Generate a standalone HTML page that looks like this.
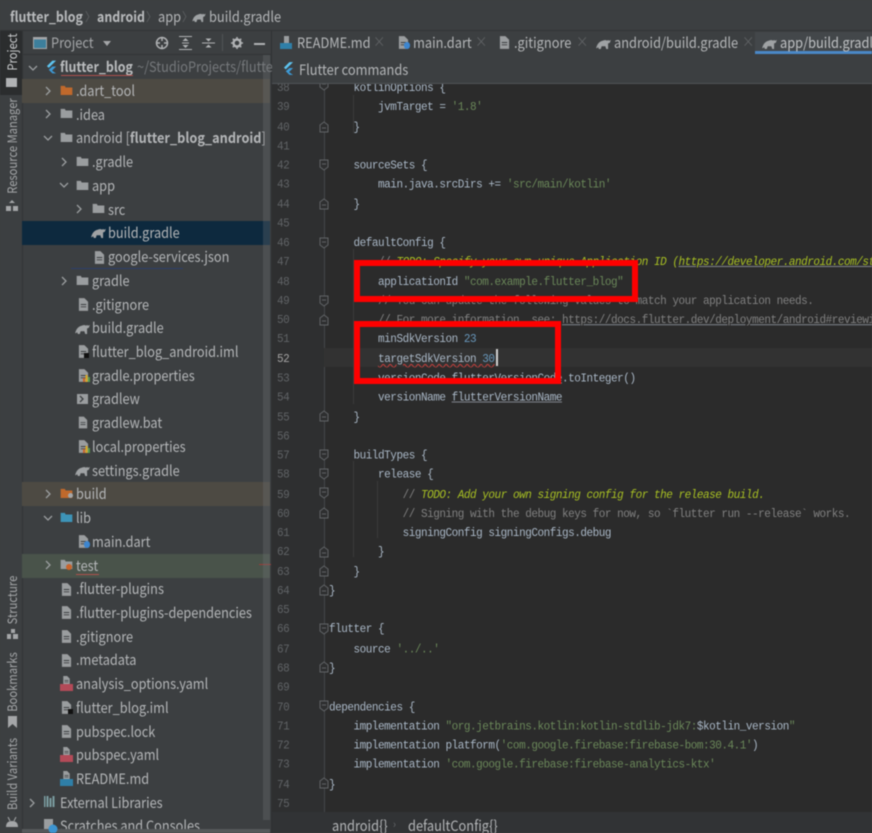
<!DOCTYPE html>
<html><head><meta charset="utf-8">
<style>
html,body{margin:0;padding:0;background:#3c3f41}
#w{position:relative;width:872px;height:833px;overflow:hidden;background:#3c3f41;font-family:"Noto Sans CJK KR","Liberation Sans",sans-serif;color:#afb1b3;filter:blur(.45px)}
#w div,#w svg,#w span.a{position:absolute}
.r{height:24px;line-height:24px;font-size:14.4px;white-space:nowrap;color:#b4b6b8;transform:scaleX(.885);transform-origin:left center}
.bg{left:22px;width:248px;height:24px}
.t{height:24px;line-height:24px;font-size:14.4px;white-space:nowrap;color:#b4b6b8;transform:scaleX(.89);transform-origin:left center}
.bd{transform:scaleX(.86)}
.v{writing-mode:vertical-rl;transform:translateY(-50%) rotate(180deg) scaleY(.86);font-size:13px;line-height:16px;left:4px;color:#a4a6a8;white-space:nowrap}
pre{margin:0;font-family:"Liberation Mono",monospace;font-size:11px;letter-spacing:-.47px;line-height:17.26px;color:#a9b7c6;transform:scaleY(1.12);transform-origin:left top}
.c{color:#808080}.s{color:#6a8759}.n{color:#6897bb}.d{color:#a8c023;font-style:italic}.u{text-decoration:underline;text-decoration-color:#7a7e85}
.w{text-decoration:underline wavy #bc3f3c 1px}
.g{color:#606366}
.x{color:#5e6163;font-size:14px}
</style></head><body>
<div id="w">
<svg width="0" height="0" style="left:0;top:0">
<defs>
<symbol id="fo" viewBox="0 0 14 12"><path d="M0 1h5l1 2h8v9H0z"/></symbol>
<symbol id="fi" viewBox="0 0 12 14"><path d="M1 0h6l4 4v10H1z" fill="#9a9d9f"/><path d="M3 7h6M3 9.500h6" stroke="#3c3f41"/></symbol>
<symbol id="gr" viewBox="0 0 16 12"><path d="M0 11c1-4 3-7 7-8 2-1 4-1 5 0l1-1 1 1 2-1-1 3-2 1v6h-2l-1-3H6l-1 3H3l-1-2-1 1z" fill="#9fa2a4"/></symbol>
<symbol id="fl" viewBox="0 0 12 14"><path d="M7 0h4L3 8 1 6z" fill="#5ec4f0"/><path d="M7 6.500h4L6.500 11l4.500 3H7L3 10z" fill="#3d9ad6"/></symbol>
<symbol id="ch" viewBox="0 0 8 10"><path d="M2 1l4 4-4 4" fill="none" stroke="#9a9d9f" stroke-width="1.300"/></symbol>
<symbol id="cd" viewBox="0 0 10 8"><path d="M1 2l4 4 4-4" fill="none" stroke="#9a9d9f" stroke-width="1.300"/></symbol>
<symbol id="fu" viewBox="0 0 12 12"><path d="M2 11h8V4L6 1 2 4z" fill="#2e2f30" stroke="#606366"/><path d="M4 7h4" stroke="#606366"/></symbol>
<symbol id="fd" viewBox="0 0 12 12"><path d="M2 1h8v7l-4 3-4-3z" fill="#2e2f30" stroke="#606366"/><path d="M4 5h4" stroke="#606366"/></symbol>
</defs>
</svg>

<!-- top breadcrumb -->
<div class="t bd" style="left:10px;top:5px;font-weight:700;color:#b9bbbd">flutter_blog</div>
<div class="t" style="left:85px;top:5px;color:#5e6163;font-size:12px">〉</div>
<div class="t bd" style="left:96.500px;top:5px;font-weight:700;color:#b9bbbd">android</div>
<div class="t" style="left:146px;top:5px;color:#5e6163;font-size:12px">〉</div>
<div class="t" style="left:158px;top:5px">app</div>
<div class="t" style="left:182px;top:5px;color:#5e6163;font-size:12px">〉</div>
<svg style="left:192px;top:12px" width="14" height="10" fill="#999"><use href="#gr"/></svg>
<div class="t" style="left:209px;top:5px">build.gradle</div>
<div style="left:0;top:30px;width:872px;height:1px;background:#323436"></div>

<!-- left strip -->
<div style="left:0;top:31px;width:22px;height:64px;background:#2b2d2e"></div>
<div style="left:22px;top:31px;width:1px;height:802px;background:#323436"></div>
<div class="v" style="top:51.500px;color:#c8cacc">Project</div>
<div style="left:6px;top:78px;width:11px;height:9px;background:#b0b2b4"></div>
<div class="v" style="top:145.500px">Resource Manager</div>
<svg style="left:6px;top:200px" width="12" height="11"><path d="M6 0l3 3H3zM0 6h5v5H0zM7 6h5v5H7z" fill="#a4a6a8"/></svg>
<div class="v" style="top:599.500px">Structure</div>
<svg style="left:7px;top:629px" width="11" height="10"><path d="M4 0h4v4H4zM0 5h4v5H0zM6 5h5v5H6z" fill="#a4a6a8"/></svg>
<div class="v" style="top:682px">Bookmarks</div>
<svg style="left:7px;top:716px" width="11" height="12"><path d="M1 0h9v12L5.500 8 1 12z" fill="#a4a6a8"/></svg>
<div class="v" style="top:773.500px">Build Variants</div>
<svg style="left:6px;top:817px" width="12" height="10"><path d="M0 10c0-4 2-6 6-6s6 2 6 6z" fill="#a4a6a8"/><path d="M2 0l2 4M10 0L8 4" stroke="#a4a6a8"/></svg>

<!-- project toolbar -->
<svg style="left:33px;top:37px" width="14" height="12"><rect x=".5" y=".5" width="13" height="11" fill="#3d7f9c" stroke="#a4a6a8"/><rect x=".5" y=".5" width="13" height="2" fill="#a4a6a8"/></svg>
<div class="t" style="left:51px;top:31px;color:#a4a6a8">Project</div>
<svg style="left:103px;top:41px" width="8" height="5"><path d="M0 0h8L4 5z" fill="#a4a6a8"/></svg>
<svg style="left:155px;top:36px" width="14" height="14"><circle cx="7" cy="7" r="5.500" fill="none" stroke="#b0b2b4" stroke-width="1.500"/><path d="M7 1v4M7 9v4M1 7h4M9 7h4" stroke="#b0b2b4" stroke-width="1.500"/></svg>
<svg style="left:179px;top:36px" width="13" height="14"><path d="M0 .5h13M0 13.500h13M3 7h7" stroke="#b0b2b4"/><path d="M6.500 2l3 3h-6zM6.500 12l3-3h-6z" fill="#b0b2b4"/></svg>
<svg style="left:202px;top:36px" width="13" height="14"><path d="M0 7h13" stroke="#b0b2b4"/><path d="M6.500 5.500l3-3h-6zM6.500 8.500l3 3h-6z" fill="#b0b2b4"/></svg>
<div style="left:222px;top:34px;width:1px;height:17px;background:#505356"></div>
<svg style="left:231px;top:37px" width="12" height="12"><circle cx="6" cy="6" r="3.500" fill="none" stroke="#b0b2b4" stroke-width="2.400"/><path d="M6 0v2M6 10v2M0 6h2M10 6h2M1.800 1.800l1.400 1.400M8.800 8.800l1.400 1.400M1.800 10.200l1.400-1.400M8.800 3.200l1.400-1.400" stroke="#b0b2b4" stroke-width="1.500"/></svg>
<div style="left:254px;top:43px;width:11px;height:1.500px;background:#b0b2b4"></div>
<div style="left:271px;top:31px;width:1px;height:802px;background:#2f3133"></div>
<div style="left:22px;top:54px;width:250px;height:1px;background:#323436"></div>

<!-- row backgrounds -->
<div class="bg" style="top:79px;background:#4d4a43"></div>
<div class="bg" style="top:221px;background:#0d293e"></div>
<div class="bg" style="top:482px;background:#4d4a43"></div>
<div class="bg" style="top:553.500px;background:#49534a"></div>

<!-- tree text -->
<div class="r bd" style="left:60px;top:55px;font-weight:700;color:#bbbdbf">flutter_blog</div>
<div class="r" style="left:137px;top:55px;color:#75787b">~/StudioProjects/flutte</div>
<div style="left:61px;top:75px;width:72px;height:1px;background:#b0504c"></div>
<div class="r" style="left:76px;top:79px">.dart_tool</div>
<div class="r" style="left:76px;top:102.700px">.idea</div>
<div class="r" style="left:76px;top:126.400px">android [<b>flutter_blog_android</b>]</div>
<div class="r" style="left:92px;top:150px">.gradle</div>
<div class="r" style="left:92px;top:173.900px">app</div>
<div class="r" style="left:108px;top:197.600px">src</div>
<div class="r" style="left:108px;top:221.300px">build.gradle</div>
<div class="r" style="left:108px;top:245px">google-services.json</div>
<div style="left:71px;top:268px;width:112px;height:1px;background:#2d3f6a"></div>
<div class="r" style="left:92px;top:268.800px">gradle</div>
<div class="r" style="left:92px;top:292.500px">.gitignore</div>
<div class="r" style="left:92px;top:316.200px">build.gradle</div>
<div class="r" style="left:92px;top:339.900px">flutter_blog_android.iml</div>
<div class="r" style="left:92px;top:363.700px">gradle.properties</div>
<div class="r" style="left:92px;top:387.400px">gradlew</div>
<div class="r" style="left:92px;top:411.100px">gradlew.bat</div>
<div class="r" style="left:92px;top:434.800px">local.properties</div>
<div class="r" style="left:92px;top:458.600px">settings.gradle</div>
<div class="r" style="left:76px;top:482.300px">build</div>
<div class="r" style="left:76px;top:506px">lib</div>
<div class="r" style="left:92px;top:529.700px">main.dart</div>
<div class="r" style="left:76px;top:553.500px">test</div>
<div style="left:76px;top:574px;width:23px;height:1px;background:#b0504c"></div>
<div style="left:259px;top:564px;width:12px;height:1px;background:#9c3b38"></div>
<div class="r" style="left:76px;top:577.200px">.flutter-plugins</div>
<div class="r" style="left:76px;top:600.900px">.flutter-plugins-dependencies</div>
<div class="r" style="left:76px;top:624.600px">.gitignore</div>
<div class="r" style="left:76px;top:648.400px">.metadata</div>
<div class="r" style="left:76px;top:672.100px">analysis_options.yaml</div>
<div class="r" style="left:76px;top:695.800px">flutter_blog.iml</div>
<div class="r" style="left:76px;top:719.500px">pubspec.lock</div>
<div class="r" style="left:76px;top:743.300px">pubspec.yaml</div>
<div class="r" style="left:76px;top:767px">README.md</div>
<div class="r" style="left:60px;top:790.700px">External Libraries</div>
<div class="r" style="left:60px;top:814.400px">Scratches and Consoles</div>
<div style="left:263px;top:55px;width:7px;height:765px;background:rgba(120,122,124,.28)"></div>
<div style="left:22px;top:829px;width:248px;height:4px;background:#55585a"></div>

<!-- chevrons -->
<svg style="left:28px;top:64px" width="10" height="8"><use href="#cd"/></svg>
<svg style="left:44px;top:86px" width="8" height="10"><use href="#ch"/></svg>
<svg style="left:44px;top:109px" width="8" height="10"><use href="#ch"/></svg>
<svg style="left:43px;top:134px" width="10" height="8"><use href="#cd"/></svg>
<svg style="left:60px;top:157px" width="8" height="10"><use href="#ch"/></svg>
<svg style="left:59px;top:181px" width="10" height="8"><use href="#cd"/></svg>
<svg style="left:75px;top:204px" width="8" height="10"><use href="#ch"/></svg>
<svg style="left:60px;top:276px" width="8" height="10"><use href="#ch"/></svg>
<svg style="left:44px;top:489px" width="8" height="10"><use href="#ch"/></svg>
<svg style="left:43px;top:514px" width="10" height="8"><use href="#cd"/></svg>
<svg style="left:44px;top:560px" width="8" height="10"><use href="#ch"/></svg>
<svg style="left:28px;top:798px" width="8" height="10"><use href="#ch"/></svg>

<!-- folder icons -->
<svg style="left:46px;top:60px" width="11" height="14"><use href="#fl"/></svg>
<svg style="left:60px;top:85px" width="13" height="10" fill="#c0692c"><use href="#fo"/></svg>
<svg style="left:60px;top:108px" width="13" height="10" fill="#9a9d9f"><use href="#fo"/></svg>
<svg style="left:60px;top:132px" width="13" height="10" fill="#9a9d9f"><use href="#fo"/></svg>
<svg style="left:76px;top:156px" width="13" height="10" fill="#9a9d9f"><use href="#fo"/></svg>
<svg style="left:76px;top:180px" width="13" height="10" fill="#9a9d9f"><use href="#fo"/></svg>
<svg style="left:92px;top:203px" width="13" height="10" fill="#9a9d9f"><use href="#fo"/></svg>
<svg style="left:76px;top:275px" width="13" height="10" fill="#9a9d9f"><use href="#fo"/></svg>
<svg style="left:60px;top:488px" width="13" height="10" fill="#c0692c"><use href="#fo"/></svg>
<svg style="left:60px;top:512px" width="13" height="10" fill="#3d94b8"><use href="#fo"/></svg>
<svg style="left:60px;top:559px" width="13" height="10" fill="#9a9d9f"><use href="#fo"/></svg>
<div style="left:66px;top:564px;width:6px;height:6px;border-radius:3px;background:#c8642c"></div>
<div style="left:68px;top:493px;width:5px;height:5px;border-radius:3px;background:#a4a6a8"></div>

<!-- gradle icons -->
<svg style="left:91px;top:227px" width="15" height="11"><use href="#gr"/></svg>
<svg style="left:75px;top:323px" width="15" height="11"><use href="#gr"/></svg>
<svg style="left:75px;top:465px" width="15" height="11"><use href="#gr"/></svg>

<!-- file icons -->
<svg style="left:94px;top:251px" width="11" height="13"><use href="#fi"/></svg>
<svg style="left:78px;top:298px" width="11" height="13"><use href="#fi"/></svg>
<svg style="left:78px;top:345px" width="11" height="13"><use href="#fi"/></svg>
<div style="left:84px;top:353px;width:5px;height:5px;background:#111"></div>
<svg style="left:78px;top:369px" width="11" height="13"><use href="#fi"/></svg>
<svg style="left:83px;top:375px" width="7" height="7"><path d="M0 3h2v4H0z" fill="#c8642c"/><path d="M2.500 0h2v7h-2z" fill="#d8a820"/><path d="M5 2h2v5H5z" fill="#5a9c48"/></svg>
<svg style="left:77px;top:394px" width="11" height="10"><rect width="11" height="10" fill="#9a9d9f"/><path d="M3 2l3 3-3 3" fill="none" stroke="#3c3f41" stroke-width="1.300"/></svg>
<svg style="left:78px;top:416px" width="10" height="13"><use href="#fi"/></svg>
<svg style="left:78px;top:440px" width="11" height="13"><use href="#fi"/></svg>
<svg style="left:83px;top:446px" width="7" height="7"><path d="M0 3h2v4H0z" fill="#c8642c"/><path d="M2.500 0h2v7h-2z" fill="#d8a820"/><path d="M5 2h2v5H5z" fill="#5a9c48"/></svg>
<svg style="left:78px;top:535px" width="11" height="13"><use href="#fi"/></svg>
<div style="left:84px;top:541px;width:6px;height:7px;border-radius:3px;background:#3d86d0"></div>
<svg style="left:61px;top:583px" width="11" height="13"><use href="#fi"/></svg>
<svg style="left:61px;top:606px" width="11" height="13"><use href="#fi"/></svg>
<svg style="left:61px;top:630px" width="11" height="13"><use href="#fi"/></svg>
<svg style="left:61px;top:654px" width="11" height="13"><use href="#fi"/></svg>
<svg style="left:60px;top:676px" width="13" height="9"><use href="#fi"/></svg>
<div style="left:60px;top:684px;width:13px;height:7px;background:#b34a58"></div>
<svg style="left:61px;top:701px" width="11" height="13"><use href="#fi"/></svg>
<div style="left:68px;top:709px;width:5px;height:5px;background:#111"></div>
<svg style="left:61px;top:725px" width="11" height="13"><use href="#fi"/></svg>
<svg style="left:60px;top:747px" width="13" height="9"><use href="#fi"/></svg>
<div style="left:60px;top:755px;width:13px;height:7px;background:#b34a58"></div>
<svg style="left:60px;top:771px" width="13" height="9"><use href="#fi"/></svg>
<div style="left:60px;top:779px;width:13px;height:7px;background:#2f7fa8"></div>
<svg style="left:44px;top:796px" width="12" height="12"><path d="M.5 0v11M3.500 0v11M6.500 2v9M9.500 0v11" stroke-width="2" stroke="#7a9ca0" fill="none"/></svg>
<svg style="left:44px;top:819px" width="14" height="14"><rect width="9" height="10" fill="#9a9d9f"/><circle cx="9" cy="10" r="4.500" fill="#3d94d0"/></svg>

<!-- tabs -->
<div style="left:272px;top:31px;width:600px;height:23px;background:#3c3f41"></div>
<svg style="left:280px;top:36px" width="12" height="14"><path d="M4 0h5v7H4z" fill="#9a9d9f"/><rect y="7" width="12" height="6" fill="#2f7fa8"/></svg>
<div class="t" style="left:297px;top:31px">README.md</div><div class="t x" style="left:373px;top:30px">×</div>
<svg style="left:398px;top:36px" width="11" height="13"><use href="#fi"/></svg>
<div style="left:404px;top:42px;width:6px;height:7px;border-radius:3px;background:#3d86d0"></div>
<div class="t" style="left:413px;top:31px">main.dart</div><div class="t x" style="left:475px;top:30px">×</div>
<svg style="left:499px;top:36px" width="11" height="13"><use href="#fi"/></svg>
<div class="t" style="left:514px;top:31px">.gitignore</div><div class="t x" style="left:576px;top:30px">×</div>
<svg style="left:596px;top:38px" width="15" height="11"><use href="#gr"/></svg>
<div class="t" style="left:614px;top:31px">android/build.gradle</div><div class="t x" style="left:742px;top:30px">×</div>
<div style="left:755px;top:32px;width:117px;height:22px;background:#43474a"></div>
<div style="left:755px;top:51px;width:117px;height:3px;background:#4a88c7"></div>
<svg style="left:762px;top:38px" width="15" height="11"><use href="#gr"/></svg>
<div class="t" style="left:780px;top:31px;color:#bfc1c3">app/build.gradle</div>

<!-- flutter bar -->
<div style="left:272px;top:54px;width:600px;height:29px;background:#3c3f41"></div>
<div style="left:272px;top:83px;width:600px;height:1px;background:#505356"></div>
<svg style="left:283px;top:61px" width="11" height="15"><use href="#fl"/></svg>
<div class="t" style="left:299px;top:58px;color:#b4b6b8">Flutter commands</div>

<!-- editor -->
<div style="left:272px;top:84px;width:600px;height:728px;background:#2b2b2b;overflow:hidden" id="ed">
<div style="left:0;top:0;width:52px;height:728px;background:#2e2f30"></div>
<div style="left:52px;top:0;width:1px;height:728px;background:#45484a"></div>
<div style="left:52px;top:264px;width:548px;height:19px;background:#323232"></div>
<div style="left:81px;top:11px;width:1px;height:38px;background:#3b3b3b"></div>
<div style="left:81px;top:165px;width:1px;height:155px;background:#3b3b3b"></div>
<div style="left:81px;top:377px;width:1px;height:96px;background:#3b3b3b"></div>
<div style="left:105px;top:397px;width:1px;height:57px;background:#3b3b3b"></div>

<pre class="g" style="position:absolute;left:5px;top:-4px">38
39
40
41
42
43
44
45
46
47
48
49
50
51
<span style="color:#a4a3a3">52</span>
53
54
55
56
57
58
59
60
61
62
63
64
65
66
67
68
69
70
71
72
73
74
75</pre>

<pre style="position:absolute;left:57px;top:-4px">    kotlinOptions {
        jvmTarget = <span class="s">'1.8'</span>
    }

    sourceSets {
        main.java.srcDirs += <span class="s">'src/main/kotlin'</span>
    }

    defaultConfig {
        <span class="c">// </span><span class="d">TODO: Specify your own unique Application ID (<span class="u">https://developer.android.com/st</span></span>
        applicationId <span class="s">"com.example.flutter_blog"</span>
        <span class="c">// You can update the following values to match your application needs.</span>
        <span class="c">// For more information, see: <span class="u">https://docs.flutter.dev/deployment/android#reviewi</span></span>
        minSdkVersion <span class="n">23</span>
        <span class="w">targetSdkVersion <span class="n">30</span></span>
        versionCode <span class="u">flutterVersionCode</span>.toInteger()
        versionName <span class="u">flutterVersionName</span>
    }

    buildTypes {
        release {
            <span class="c">// </span><span class="d">TODO: Add your own signing config for the release build.</span>
            <span class="c">// Signing with the debug keys for now, so `flutter run --release` works.</span>
            signingConfig signingConfigs.debug
        }
    }
}

flutter {
    source <span class="s">'../..'</span>
}

dependencies {
    implementation <span class="s">"org.jetbrains.kotlin:kotlin-stdlib-jdk7:</span>$kotlin_version<span class="s">"</span>
    implementation platform(<span class="s">'com.google.firebase:firebase-bom:30.4.1'</span>)
    implementation <span class="s">'com.google.firebase:firebase-analytics-ktx'</span>
}
</pre>
<div style="left:224px;top:265px;width:1.500px;height:17px;background:#d0d0d0"></div>

<!-- fold markers -->
<svg style="left:46px;top:0" width="12" height="8" viewBox="0 5 12 8"><use href="#fd" width="12" height="12" y="0"/></svg>
<svg style="left:46px;top:37px" width="12" height="12"><use href="#fu"/></svg>
<svg style="left:46px;top:75px" width="12" height="12"><use href="#fd"/></svg>
<svg style="left:46px;top:114px" width="12" height="12"><use href="#fu"/></svg>
<svg style="left:46px;top:153px" width="12" height="12"><use href="#fd"/></svg>
<svg style="left:46px;top:211px" width="12" height="12"><use href="#fd"/></svg>
<svg style="left:46px;top:230px" width="12" height="12"><use href="#fu"/></svg>
<svg style="left:46px;top:326px" width="12" height="12"><use href="#fu"/></svg>
<svg style="left:46px;top:365px" width="12" height="12"><use href="#fd"/></svg>
<svg style="left:46px;top:384px" width="12" height="12"><use href="#fd"/></svg>
<svg style="left:46px;top:403px" width="12" height="12"><use href="#fd"/></svg>
<svg style="left:46px;top:423px" width="12" height="12"><use href="#fu"/></svg>
<svg style="left:46px;top:462px" width="12" height="12"><use href="#fu"/></svg>
<svg style="left:46px;top:481px" width="12" height="12"><use href="#fu"/></svg>
<svg style="left:46px;top:500px" width="12" height="12"><use href="#fu"/></svg>
<svg style="left:46px;top:539px" width="12" height="12"><use href="#fd"/></svg>
<svg style="left:46px;top:577px" width="12" height="12"><use href="#fu"/></svg>
<svg style="left:46px;top:616px" width="12" height="12"><use href="#fd"/></svg>
<svg style="left:46px;top:693px" width="12" height="12"><use href="#fu"/></svg>
</div>

<!-- bottom breadcrumb -->
<div style="left:272px;top:812px;width:600px;height:21px;background:#313335"></div>
<div class="t" style="left:332px;top:814px">android{}</div>
<div class="t" style="left:393px;top:812px;font-size:11px;color:#6a6d70">›</div>
<div class="t" style="left:408px;top:814px">defaultConfig{}</div>

<!-- red boxes -->
<div style="left:354px;top:260px;width:284px;height:42px;box-sizing:border-box;border:6px solid #fe0000"></div>
<div style="left:354px;top:321px;width:207px;height:63px;box-sizing:border-box;border:6px solid #fe0000"></div>
</div>
</body></html>
